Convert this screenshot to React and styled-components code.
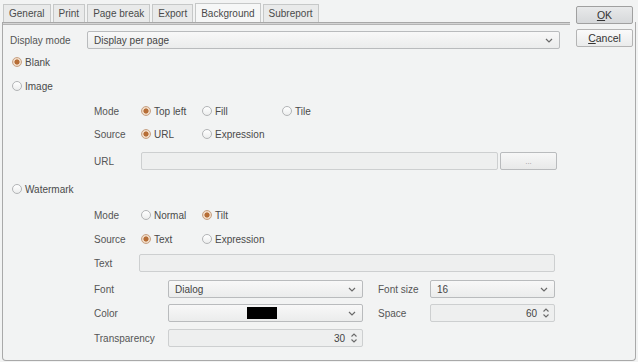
import styled, { createGlobalStyle } from 'styled-components';

const GlobalStyle = createGlobalStyle`
  html, body {
    margin: 0;
    padding: 0;
    background: #f2f3f3;
  }
  body {
    font-family: "Liberation Sans", Arial, sans-serif;
    font-size: 10px;
    color: #4a4a4a;
  }
`;

const Window = styled.div`
  width: 638px;
  height: 362px;
  display: grid;
  grid-template-columns: 570px 1fr;
  grid-template-rows: 22px 1fr;
  background: #f2f3f3;
`;

const Frame = styled.div`
  grid-area: 2 / 1 / 3 / 3;
  margin: 0 2px 1px 2px;
  border: 1px solid #a9a9a9;
  border-top: none;
  border-radius: 0 0 4px 4px;
`;

const TabBar = styled.div`
  grid-area: 1 / 1 / 2 / 2;
  display: flex;
  align-items: flex-end;
  padding-left: 3px;
`;

const Tab = styled.div`
  height: ${({ $active }) => ($active ? '19px' : '18px')};
  box-sizing: border-box;
  padding: 0 5px;
  margin-right: 2px;
  display: flex;
  align-items: center;
  border: 1px solid #c6c8c8;
  border-bottom: none;
  background: ${({ $active }) => ($active ? '#f6f7f7' : '#e9eaea')};
  color: #4a4a4a;
  white-space: nowrap;
`;

const Panel = styled.div`
  grid-area: 2 / 1 / 3 / 2;
  margin-left: 3px;
  border-top: 1px solid #a8a8a8;
  box-shadow: inset 0 1px 0 #d4d4d4, inset 0 2px 0 #b4b4b4;
  padding: 8px 10px 0 7px;
  display: flex;
  flex-direction: column;
`;

const Buttons = styled.div`
  grid-area: 1 / 2 / 3 / 3;
  align-self: start;
  display: flex;
  flex-direction: column;
  gap: 5px;
  padding: 6px 0 0 6px;
  z-index: 1;
`;

const Button = styled.div`
  width: 57px;
  height: 18px;
  box-sizing: border-box;
  border: 1px solid ${({ $default }) => ($default ? '#a0a0a0' : '#b4b4b4')};
  border-radius: 2px;
  background: ${({ $default }) =>
    $default
      ? 'linear-gradient(#e8e9ea, #d6d8da)'
      : 'linear-gradient(#fafafa, #eaebeb)'};
  display: flex;
  align-items: center;
  justify-content: center;
  color: #333;
  font-size: 10.5px;

  u {
    text-decoration: underline;
    text-underline-offset: 1px;
  }
`;

const Row = styled.div`
  height: 18px;
  margin-top: ${({ $gap }) => $gap || 0}px;
  display: flex;
  align-items: center;
`;

const FieldRow = styled.div`
  height: 18px;
  margin-top: ${({ $gap }) => $gap || 0}px;
  margin-left: ${({ $indent }) => $indent || 0}px;
  display: grid;
  grid-template-columns: ${({ $cols }) => $cols};
  column-gap: ${({ $colGap }) => $colGap || 0}px;
  align-items: center;
`;

const Label = styled.span`
  color: #555;
  padding-left: ${({ $pad }) => $pad || 0}px;
  white-space: nowrap;
`;

const RadioGroup = styled.div`
  display: grid;
  grid-template-columns: 61px 80px auto;
  padding-left: 2px;
`;

const Radio = styled.label`
  display: flex;
  align-items: center;
  gap: 3px;
  color: #4a4a4a;
  padding-left: ${({ $pad }) => $pad || 0}px;
  white-space: nowrap;
`;

const Dot = styled.span`
  width: 10px;
  height: 10px;
  box-sizing: border-box;
  border-radius: 50%;
  border: 1px solid ${({ $on }) => ($on ? '#c8a284' : '#b2b4b6')};
  background: ${({ $on }) =>
    $on
      ? 'radial-gradient(circle, #b66d36 0 2.3px, #efd9c4 2.8px)'
      : 'linear-gradient(#ffffff, #eceded)'};
`;

const Combo = styled.div`
  height: 18px;
  box-sizing: border-box;
  border: 1px solid #b9bbbd;
  border-radius: 2px;
  background: linear-gradient(#f8f8f8, #ebecec);
  display: flex;
  align-items: center;
  padding: 0 6px 0 6px;
  color: #444;
`;

const ComboText = styled.span`
  flex: 1;
  display: flex;
  justify-content: ${({ $center }) => ($center ? 'center' : 'flex-start')};
`;

const TextField = styled.div`
  height: 18px;
  box-sizing: border-box;
  border: 1px solid #cdcfd0;
  border-radius: 2px;
  background: #eeefef;
`;

const Spinner = styled.div`
  height: 18px;
  box-sizing: border-box;
  border: 1px solid #cdcfd0;
  border-radius: 2px;
  background: #eeefef;
  display: flex;
  align-items: center;
  justify-content: flex-end;
  gap: 5px;
  padding-right: 4px;
  color: #444;
`;

const SmallButton = styled.div`
  height: 18px;
  box-sizing: border-box;
  border: 1px solid #b9bbbd;
  border-radius: 2px;
  background: linear-gradient(#f7f7f7, #e8e9e9);
  display: flex;
  align-items: center;
  justify-content: center;
  color: #999;
  font-size: 8px;
`;

const Swatch = styled.span`
  width: 30px;
  height: 12px;
  background: #000;
`;

const Chevron = () => (
  <svg width="8" height="5" viewBox="0 0 8 5">
    <path d="M1 1l3 3 3-3" fill="none" stroke="#6a6a6a" strokeWidth="1.2" />
  </svg>
);

const SpinArrows = () => (
  <svg width="8" height="12" viewBox="0 0 8 12">
    <path d="M1.5 4.5L4 2l2.5 2.5M1.5 7.5L4 10l2.5-2.5" fill="none" stroke="#6a6a6a" strokeWidth="1.1" />
  </svg>
);

const tabs = ['General', 'Print', 'Page break', 'Export', 'Background', 'Subreport'];

export default function App() {
  return (
    <>
      <GlobalStyle />
      <Window>
        <Frame />
        <TabBar>
          {tabs.map((t) => (
            <Tab key={t} $active={t === 'Background'}>
              {t}
            </Tab>
          ))}
        </TabBar>
        <Buttons>
          <Button $default>
            <span><u>O</u>K</span>
          </Button>
          <Button>
            <span><u>C</u>ancel</span>
          </Button>
        </Buttons>
        <Panel>
          <FieldRow $cols="77px 473px">
            <Label>Display mode</Label>
            <Combo>
              <ComboText>Display per page</ComboText>
              <Chevron />
            </Combo>
          </FieldRow>

          <Row $gap={4}>
            <Radio $pad={2}><Dot $on />Blank</Radio>
          </Row>
          <Row $gap={6}>
            <Radio $pad={2}><Dot />Image</Radio>
          </Row>

          <FieldRow $gap={7} $indent={84} $cols="45px 1fr">
            <Label>Mode</Label>
            <RadioGroup>
              <Radio><Dot $on />Top left</Radio>
              <Radio><Dot />Fill</Radio>
              <Radio><Dot />Tile</Radio>
            </RadioGroup>
          </FieldRow>
          <FieldRow $gap={5} $indent={84} $cols="45px 1fr">
            <Label>Source</Label>
            <RadioGroup>
              <Radio><Dot $on />URL</Radio>
              <Radio><Dot />Expression</Radio>
            </RadioGroup>
          </FieldRow>
          <FieldRow $gap={9} $indent={84} $cols="45px 357px 57px" $colGap={2}>
            <Label>URL</Label>
            <TextField />
            <SmallButton>...</SmallButton>
          </FieldRow>

          <Row $gap={10}>
            <Radio $pad={2}><Dot />Watermark</Radio>
          </Row>

          <FieldRow $gap={8} $indent={84} $cols="45px 1fr">
            <Label>Mode</Label>
            <RadioGroup>
              <Radio><Dot />Normal</Radio>
              <Radio><Dot $on />Tilt</Radio>
            </RadioGroup>
          </FieldRow>
          <FieldRow $gap={6} $indent={84} $cols="45px 1fr">
            <Label>Source</Label>
            <RadioGroup>
              <Radio><Dot $on />Text</Radio>
              <Radio><Dot />Expression</Radio>
            </RadioGroup>
          </FieldRow>
          <FieldRow $gap={6} $indent={84} $cols="45px 416px">
            <Label>Text</Label>
            <TextField />
          </FieldRow>

          <FieldRow $gap={8} $indent={84} $cols="74px 195px 67px 125px">
            <Label>Font</Label>
            <Combo>
              <ComboText>Dialog</ComboText>
              <Chevron />
            </Combo>
            <Label $pad={15}>Font size</Label>
            <Combo>
              <ComboText>16</ComboText>
              <Chevron />
            </Combo>
          </FieldRow>
          <FieldRow $gap={6} $indent={84} $cols="74px 195px 67px 125px">
            <Label>Color</Label>
            <Combo>
              <ComboText $center>
                <Swatch />
              </ComboText>
              <Chevron />
            </Combo>
            <Label $pad={15}>Space</Label>
            <Spinner>
              60
              <SpinArrows />
            </Spinner>
          </FieldRow>
          <FieldRow $gap={7} $indent={84} $cols="74px 195px">
            <Label>Transparency</Label>
            <Spinner>
              30
              <SpinArrows />
            </Spinner>
          </FieldRow>
        </Panel>
      </Window>
    </>
  );
}
